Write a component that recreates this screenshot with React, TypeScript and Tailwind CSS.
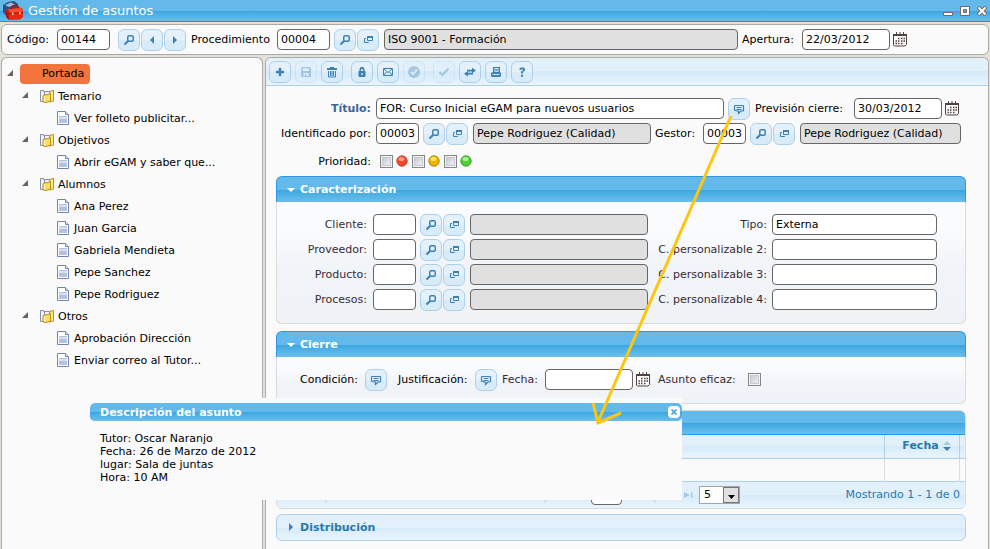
import React from 'react';

type GlyphName =
  | 'search' | 'copy' | 'left' | 'right' | 'plus' | 'disk' | 'trash' | 'lock' | 'mail'
  | 'circleCheck' | 'check' | 'transfer' | 'print' | 'help' | 'comment';

const glyphs: Record<GlyphName, React.ReactNode> = {
  search: (
    <>
      <rect x="5.750" y="2.750" width="5.500" height="5.500" rx="1.500" fill="none" stroke="currentColor" strokeWidth="1.500" />
      <path d="M6 8 L2.500 11.500" stroke="currentColor" strokeWidth="2" fill="none" />
    </>
  ),
  copy: (
    <>
      <path d="M6.500 3.500h5v4h-5z" fill="none" stroke="currentColor" />
      <path d="M6 3h6v2H6z" fill="currentColor" />
      <path d="M5 5.500H3.500v4h4V9" fill="none" stroke="currentColor" />
    </>
  ),
  left: <path d="M9 3v8L5 7z" fill="currentColor" />,
  right: <path d="M5 3v8l4-4z" fill="currentColor" />,
  plus: <path d="M6 3h2v3h3v2H8v3H6V8H3V6h3z" fill="currentColor" stroke="currentColor" strokeWidth=".4" />,
  disk: (
    <path fillRule="evenodd" d="M2 3l1-1h8l1 1v9H2zM4 3.500v2.500h6V3.500zM4.500 8v3h1.500V9h1v2h2.500V8z" fill="currentColor" />
  ),
  trash: (
    <>
      <path d="M5 2h4v1h3v2H2V3h3z" fill="currentColor" />
      <path d="M3.500 6v6h7V6M5.500 6v5M7 6v5M8.500 6v5" fill="none" stroke="currentColor" />
    </>
  ),
  lock: (
    <path fillRule="evenodd" d="M3.500 6h1V4l1.200-2h2.600L9.500 4v2h1v5l-.5 1H4l-.5-1zM6 6h2V4.200H6zM6.300 8v2h1.400V8z" fill="currentColor" />
  ),
  mail: <path d="M2.500 3.500h9v7h-9zM3 4l4 3.500L11 4M3 10l2.500-3M11 10L8.500 7" fill="none" stroke="currentColor" />,
  circleCheck: (
    <>
      <circle cx="7" cy="7" r="6" fill="currentColor" />
      <path d="M4 7l2 2.200L10 4.800" fill="none" stroke="#e3f1fb" strokeWidth="1.800" />
    </>
  ),
  check: <path d="M2.500 7l3 3 6-6.500" fill="none" stroke="currentColor" strokeWidth="2" />,
  transfer: (
    <>
      <path d="M4 4.800h5V2.800l4 2.700L9 8.200V6.500H4z" fill="currentColor" />
      <path d="M10 7.700H5V6L1 8.700l4 2.700V9.500h5z" fill="currentColor" />
    </>
  ),
  print: (
    <path fillRule="evenodd" d="M4 2h7v5l1 1v3l-1 1H3l-1-1V8l2-1zM5.500 3v4h4V3zM6 4h3v.8H6zM6 5.500h3v.8H6zM3.500 9v1h7V9z" fill="currentColor" />
  ),
  help: (
    <path d="M4.500 5V3.500L6 2.500h2.500L10 3.500v2L8 7v1.500H6V6.500l2-1.300V4.300H6.500V5zM6 9.700h2v2H6z" fill="currentColor" />
  ),
  comment: (
    <>
      <path d="M3 3.500h8l.5.5v4.500l-.5.500H9L6.500 11.500V9H5L2.500 8V4z" fill="none" stroke="currentColor" strokeWidth="1.200" />
      <path d="M4.500 5.500h5M4.500 7.500h5" stroke="currentColor" />
    </>
  ),
};

function IconButton({ icon, label, disabled = false, className = '' }: {
  icon: GlyphName; label: string; disabled?: boolean; className?: string;
}) {
  return (
    <button
      type="button"
      aria-label={label}
      disabled={disabled}
      className={`flex h-[22px] w-[22px] shrink-0 items-center justify-center rounded-md border border-[#aed0ea] bg-linear-to-b from-[#e4f1fb] from-50% to-[#d7ebf9] to-50% text-[#3d80b3] disabled:opacity-35 ${className}`}
    >
      <svg width="14" height="14" viewBox="0 0 14 14" aria-hidden="true">{glyphs[icon]}</svg>
    </button>
  );
}

function TextBox({ id, value = '', label, readOnly = false, className = '' }: {
  id?: string; value?: string; label?: string; readOnly?: boolean; className?: string;
}) {
  return (
    <input
      id={id}
      type="text"
      aria-label={label}
      defaultValue={value}
      readOnly={readOnly}
      className={`h-[21px] min-w-0 rounded-[4px] border border-[#666] px-[3px] text-[11px] text-black outline-none ${readOnly ? 'bg-[#e0e0e0]' : 'bg-white'} ${className}`}
    />
  );
}

function CalendarIcon({ label, className = '' }: { label: string; className?: string }) {
  return (
    <button type="button" aria-label={label} className={`shrink-0 ${className}`}>
      <svg width="14" height="15" viewBox="0 0 14 15" aria-hidden="true">
        <path d="M.500 2.500h13v10l-1.500 1.500H1.500l-1-1z" fill="#fafafa" stroke="#50423f" />
        <path d="M0 2h14v2H0z" fill="#50423f" />
        <path d="M3.500 0v3M7 0v3M10.500 0v3" stroke="#50423f" />
        <path d="M5 6.500h1.500M8 6.500h1.500M10.500 6.500h1.500M2.500 9h1.500M5 9h1.500M8 9h1.500M10.500 9h1.500M2.500 11.500h1.500M5 11.500h1.500M8 11.500h1.500" stroke="#50423f" strokeWidth="1.500" />
      </svg>
    </button>
  );
}

function CheckBox({ id, label, className = '' }: { id: string; label?: string; className?: string }) {
  return (
    <input
      id={id}
      type="checkbox"
      aria-label={label}
      className={`h-[13px] w-[13px] shrink-0 appearance-none border border-[#858686] bg-linear-to-br from-[#bcc2cc] to-[#f8f8f8] shadow-[inset_0_0_0_1px_#f4f4f4,inset_0_0_0_2px_#c6cad0] ${className}`}
    />
  );
}

function FolderIcon() {
  return (
    <svg width="15" height="15" viewBox="0 0 15 15" className="shrink-0" aria-hidden="true">
      <path d="M.500 1.500h3v1h2v10h-5z" fill="#f1f3f8" stroke="#8690a8" />
      <path d="M9 2.500l4.500-1v10.500l-4.500 1z" fill="#fbe98a" stroke="#b8901e" />
      <path d="M4.500 2.500h5v9h-5z" fill="#eef1f8" stroke="#8690a8" />
      <path d="M3 6.500l3-1 1 .5 3.500-1.500V12L6 13.500l-3-.5z" fill="#f8e05e" stroke="#b8901e" />
      <path d="M4.500 7.500v5" stroke="#fff6bd" />
    </svg>
  );
}

function DocIcon() {
  return (
    <svg width="12" height="14" viewBox="0 0 12 14" className="shrink-0" aria-hidden="true">
      <path d="M.5.500h8l3 3v10H.500z" fill="#fff" stroke="#7386ad" />
      <path d="M8.500.500v3h3" fill="#dfe5f2" stroke="#7386ad" />
      <path d="M2 5h8v7H2z" fill="#b4c0df" />
      <path d="M2 7h8" stroke="#fff" />
    </svg>
  );
}

function Expander() {
  return (
    <svg width="6" height="6" viewBox="0 0 6 6" className="mb-[3px] shrink-0" aria-hidden="true">
      <path d="M6 0v6H0z" fill="#6b625f" />
    </svg>
  );
}

const tree = [
  { name: 'Temario', items: ['Ver folleto publicitar...'] },
  { name: 'Objetivos', items: ['Abrir eGAM y saber que...'] },
  { name: 'Alumnos', items: ['Ana Perez', 'Juan Garcia', 'Gabriela Mendieta', 'Pepe Sanchez', 'Pepe Rodriguez'] },
  { name: 'Otros', items: ['Aprobación Dirección', 'Enviar correo al Tutor...'] },
];

const toolbar: { icon: GlyphName; label: string; disabled?: boolean }[][] = [
  [{ icon: 'plus', label: 'Nuevo' }, { icon: 'disk', label: 'Guardar', disabled: true }, { icon: 'trash', label: 'Eliminar' }],
  [{ icon: 'lock', label: 'Bloquear' }, { icon: 'mail', label: 'Correo' }, { icon: 'circleCheck', label: 'Aprobar', disabled: true }],
  [{ icon: 'check', label: 'Validar', disabled: true }, { icon: 'transfer', label: 'Transferir' }, { icon: 'print', label: 'Imprimir' }, { icon: 'help', label: 'Ayuda' }],
];

const fields = [
  { left: 'Cliente:', right: 'Tipo:', value: 'Externa' },
  { left: 'Proveedor:', right: 'C. personalizable 2:', value: '' },
  { left: 'Producto:', right: 'C. personalizable 3:', value: '' },
  { left: 'Procesos:', right: 'C. personalizable 4:', value: '' },
];

const priorities = [
  { id: 'alta', light: '#ff9a80', color: '#f0482a', edge: '#c4472f' },
  { id: 'media', light: '#ffe45c', color: '#f0b400', edge: '#a98412' },
  { id: 'baja', light: '#a8f58c', color: '#4fcf38', edge: '#4a9a3c' },
];

const headerBlue = 'bg-[#63b9e9]';

function BlueFill() {
  return (
    <span className="absolute inset-x-0 bottom-0 h-1/2 bg-linear-to-b from-[#38a7e2] to-[#6cbeeb]" aria-hidden="true" />
  );
}

function SectionHeader({ title }: { title: string }) {
  return (
    <h2>
      <button type="button" aria-expanded="true" className={`relative flex h-[26px] w-full items-center overflow-hidden rounded-t-md border border-b-0 border-[#2f96e0] pl-2.5 text-[11px] font-bold text-white ${headerBlue}`}>
        <BlueFill />
        <svg width="8" height="4" viewBox="0 0 8 4" className="relative mr-[5px]" aria-hidden="true"><path d="M0 0h8L4 4z" fill="#fff" /></svg>
        <span className="relative">{title}</span>
      </button>
    </h2>
  );
}

const sectionBody = 'rounded-b-md border border-t-0 border-[#d9dbdd] bg-linear-to-b from-[#fafbfd] from-25% via-[#f1f4f8] via-55% to-[#f0f3f6]';

export default function App() {
  return (
    <div className="relative flex h-screen flex-col overflow-hidden bg-[#e4e2d8] font-['DejaVu_Sans',Verdana,sans-serif] text-[11px] leading-[13px] text-black">
      <header className={`relative flex h-[22px] shrink-0 items-center border-b border-[#777] pl-[3px] pr-[3px] ${headerBlue}`}>
        <BlueFill />
        <svg width="20" height="19" viewBox="0 0 20 19" className="relative" aria-hidden="true">
          <path d="M0 4l5-3 6-1 4 3v9L3 15 0 11z" fill="#2b4f86" />
          <path d="M2 4l6-2.500 4 2L6 6z" fill="#9dbbe0" />
          <path d="M5 8l13-1.500 2 2V16l-3 2.500L6 19l-3-3V9z" fill="#e8270f" />
          <path d="M3 9l3 2v8l-3-3z" fill="#b3170c" />
          <path d="M9 8V6l1.500-1.500H14L15.500 6v1.500" fill="none" stroke="#b3170c" strokeWidth="1.500" />
          <path d="M6 8.500L18 7l1.500 2v2L7 12z" fill="#ff4f30" />
          <path d="M6 12.500l14-1" fill="none" stroke="#a3130a" />
          <path d="M9 11.500h1.500V14H9zM16 11h1.500v2.500H16z" fill="#ffc9a0" />
        </svg>
        <h1 className="relative ml-[5px] text-[13px] leading-4 text-white">Gestión de asuntos</h1>
        <div className="relative ml-auto flex items-center gap-[7px]">
          <button type="button" aria-label="Minimizar">
            <svg width="10" height="10" viewBox="0 0 10 10"><path d="M.5 6.500h9v3h-9z" fill="#fff" stroke="#74695e" /></svg>
          </button>
          <button type="button" aria-label="Maximizar">
            <svg width="10" height="10" viewBox="0 0 10 10"><path fillRule="evenodd" d="M.5.500h9v9h-9zM3.500 3.500h3v3h-3z" fill="#fff" stroke="#74695e" /></svg>
          </button>
          <button type="button" aria-label="Cerrar">
            <svg width="10" height="10" viewBox="0 0 10 10"><path d="M1 1l8 8M9 1L1 9" stroke="#74695e" strokeWidth="4" /><path d="M1.500 1.500l7 7M8.500 1.500l-7 7" stroke="#fff" strokeWidth="2" /></svg>
          </button>
        </div>
      </header>

      <div className="mx-px mt-0.5 flex h-[31px] shrink-0 items-center rounded-md border border-[#aaa] bg-[#fafafa] pl-[5px] pr-[81px]">
        <label htmlFor="codigo" className="w-[50px] whitespace-nowrap">Código:</label>
        <TextBox id="codigo" value="00144" className="w-[53px]" />
        <IconButton icon="search" label="Buscar asunto" className="ml-2" />
        <IconButton icon="left" label="Anterior" className="ml-px" />
        <IconButton icon="right" label="Siguiente" className="ml-px" />
        <label htmlFor="procedimiento" className="ml-[5px] w-[86px] whitespace-nowrap">Procedimiento</label>
        <TextBox id="procedimiento" value="00004" className="w-[53px]" />
        <IconButton icon="search" label="Buscar procedimiento" className="ml-1" />
        <IconButton icon="copy" label="Abrir procedimiento" className="ml-px" />
        <TextBox label="Nombre del procedimiento" value="ISO 9001 - Formación" readOnly className="ml-[5px] flex-1" />
        <label htmlFor="apertura" className="ml-1 w-[60px] whitespace-nowrap">Apertura:</label>
        <TextBox id="apertura" value="22/03/2012" className="w-[88px]" />
        <CalendarIcon label="Elegir fecha de apertura" className="ml-[3px]" />
      </div>

      <div className="mx-px mt-0.5 flex min-h-0 flex-1 gap-0.5">
        <nav aria-label="Contenido" className="w-[262px] shrink-0 overflow-hidden rounded-t-md border border-b-0 border-[#aaa] bg-[#fafafa] pt-[5px]">
          <div className="flex h-[22px] items-center pl-[5px]">
            <Expander />
            <a href="#portada" className="ml-[7px] h-5 w-[70px] rounded-[4px] bg-[#f3743c] pl-[22px] leading-5">Portada</a>
          </div>
          <ul>
            {tree.map((group) => (
              <li key={group.name}>
                <div className="flex h-[22px] items-center pl-5">
                  <Expander />
                  <span className="ml-3"><FolderIcon /></span>
                  <span className="ml-[3px]">{group.name}</span>
                </div>
                <ul>
                  {group.items.map((item) => (
                    <li key={item} className="flex h-[22px] items-center gap-[5px] pl-[55px]">
                      <DocIcon />
                      <a href="#documento">{item}</a>
                    </li>
                  ))}
                </ul>
              </li>
            ))}
          </ul>
        </nav>

        <main className="min-w-0 flex-1 overflow-hidden rounded-t-md border border-b-0 border-[#aaa] bg-[#fafafa]">
          <div role="toolbar" className="flex h-7 items-center gap-2 rounded-t-md border-b border-[#aed0ea] bg-linear-to-b from-[#e2f0fa] from-50% via-[#d5eaf9] via-50% to-[#e9f4fc] pl-[3px]">
            {toolbar.map((group, i) => (
              <div key={i} className="flex gap-1">
                {group.map((b) => <IconButton key={b.label} icon={b.icon} label={b.label} disabled={b.disabled} />)}
              </div>
            ))}
          </div>

          <div className="pl-2.5 pr-[22px] pt-2.5">
            <div className="flex h-[25px] items-center pr-[7px]">
              <label htmlFor="titulo" className="mr-[5px] w-[95px] text-right font-bold text-[#3c64a0]">Título:</label>
              <TextBox id="titulo" value="FOR: Curso Inicial eGAM para nuevos usuarios" className="flex-1" />
              <IconButton icon="comment" label="Descripción del asunto" className="ml-1" />
              <label htmlFor="prevision" className="ml-[5px] w-[99px] whitespace-nowrap">Previsión cierre:</label>
              <TextBox id="prevision" value="30/03/2012" className="w-[88px]" />
              <CalendarIcon label="Elegir fecha prevista" className="ml-[3px]" />
            </div>
            <div className="flex h-[25px] items-center pr-[5px]">
              <label htmlFor="identificado" className="mr-[5px] w-[95px] whitespace-nowrap text-right">Identificado por:</label>
              <TextBox id="identificado" value="00003" className="w-[43px]" />
              <IconButton icon="search" label="Buscar persona" className="ml-1" />
              <IconButton icon="copy" label="Abrir persona" className="ml-px" />
              <TextBox label="Nombre de quien identifica" value="Pepe Rodriguez (Calidad)" readOnly className="ml-[5px] flex-1" />
              <label htmlFor="gestor" className="ml-1 w-12 whitespace-nowrap">Gestor:</label>
              <TextBox id="gestor" value="00003" className="w-[43px]" />
              <IconButton icon="search" label="Buscar gestor" className="ml-1" />
              <IconButton icon="copy" label="Abrir gestor" className="ml-px" />
              <TextBox label="Nombre del gestor" value="Pepe Rodriguez (Calidad)" readOnly className="ml-[5px] w-[161px]" />
            </div>
            <fieldset className="flex h-[30px] items-center">
              <span className="mr-[9px] w-[95px] text-right">Prioridad:</span>
              {priorities.map((p) => (
                <label key={p.id} htmlFor={`prioridad-${p.id}`} className="flex w-8 items-center gap-[3px]">
                  <CheckBox id={`prioridad-${p.id}`} label={`Prioridad ${p.id}`} />
                  <svg width="12" height="12" viewBox="0 0 12 12" aria-hidden="true">
                    <circle cx="6" cy="6" r="5.200" fill={p.color} stroke={p.edge} />
                    <ellipse cx="5.500" cy="4" rx="3" ry="2" fill={p.light} />
                  </svg>
                </label>
              ))}
            </fieldset>

            <section className="mb-[7px]">
              <SectionHeader title="Caracterización" />
              <div className={`pb-[11px] pt-2.5 ${sectionBody}`}>
                {fields.map((f, i) => (
                  <div key={f.left} className="flex h-[25px] items-center pr-7 text-[#362b36]">
                    <label htmlFor={`izq-${i}`} className="mr-1.5 w-[90px] text-right">{f.left}</label>
                    <TextBox id={`izq-${i}`} className="w-[43px]" />
                    <IconButton icon="search" label={`Buscar ${f.left}`} className="ml-1" />
                    <IconButton icon="copy" label={`Abrir ${f.left}`} className="ml-px" />
                    <TextBox label={`Nombre ${f.left}`} readOnly className="ml-[5px] flex-1" />
                    <label htmlFor={`der-${i}`} className="mr-[5px] w-[119px] whitespace-nowrap text-right">{f.right}</label>
                    <TextBox id={`der-${i}`} value={f.value} className="w-[165px]" />
                  </div>
                ))}
              </div>
            </section>

            <section className="mb-1.5">
              <SectionHeader title="Cierre" />
              <div className={`pb-[11px] pt-2.5 ${sectionBody}`}>
                <div className="flex h-[25px] items-center whitespace-nowrap pl-[23px]">
                  <span className="w-[65px]">Condición:</span>
                  <IconButton icon="comment" label="Condición" />
                  <span className="ml-[11px] w-[77px]">Justificación:</span>
                  <IconButton icon="comment" label="Justificación" />
                  <label htmlFor="fecha-cierre" className="ml-[5px] w-[43px] text-[#362b36]">Fecha:</label>
                  <TextBox id="fecha-cierre" className="w-[88px]" />
                  <CalendarIcon label="Elegir fecha de cierre" className="ml-[3px]" />
                  <label htmlFor="eficaz" className="ml-2 w-[90px] text-[#362b36]">Asunto eficaz:</label>
                  <CheckBox id="eficaz" />
                </div>
              </div>
            </section>

            <section className="mb-[5px] overflow-hidden rounded-md border border-[#d9dbdd]">
              <div className={`relative h-6 border-b border-[#2f96e0] ${headerBlue}`}><BlueFill /></div>
              <table className="w-full table-fixed border-collapse bg-[#fafafa]">
                <thead>
                  <tr className="h-[23px] border-b border-[#aed0ea] bg-linear-to-b from-[#e2f0fa] from-50% via-[#d5eaf9] via-50% to-[#e9f4fc] text-[#2779aa]">
                    <td />
                    <th scope="col" className="w-[75px] border-x border-[#aed0ea] p-0 pb-0.5 pl-2.5">
                      <span className="flex items-center justify-center gap-1">
                        Fecha
                        <svg width="8" height="10" viewBox="0 0 8 10" className="mt-0.5" aria-hidden="true">
                          <path d="M0 4h8L4 0z" fill="#a6cbe4" />
                          <path d="M0 6h8l-4 4z" fill="#3d80b3" />
                        </svg>
                      </span>
                    </th>
                    <td className="w-1.5 p-0" />
                  </tr>
                </thead>
                <tbody>
                  <tr className="h-[23px] border-b border-[#aed0ea]">
                    <td />
                    <td className="border-x border-[#d9dbdd]" />
                    <td className="p-0" />
                  </tr>
                </tbody>
              </table>
              <div className="flex h-[26px] items-center bg-linear-to-b from-[#e2f0fa] from-50% via-[#d5eaf9] via-50% to-[#e9f4fc] pr-[5px] text-[#2779aa]">
                <span className="w-12 pl-5">Log</span>
                <span className="h-4 w-0.5 bg-[#d2e0e8]" aria-hidden="true" />
                <span className="ml-[18px] flex-1">Copiar</span>
                <span className="h-4 w-0.5 bg-[#d2e0e8]" aria-hidden="true" />
                <label htmlFor="pagina" className="ml-[3px] w-[42px]">Página</label>
                <TextBox id="pagina" className="w-[31px]" />
                <span className="ml-8 h-4 w-0.5 bg-[#d2e0e8]" aria-hidden="true" />
                <button type="button" aria-label="Última página" disabled className="ml-7">
                  <svg width="9" height="6" viewBox="0 0 9 6"><path d="M0 0v6l6-3zM7 0h1.500v6H7z" fill="#a6cbe4" /></svg>
                </button>
                <div className="relative ml-1.5 h-[18px] w-[41px]">
                  <select aria-label="Filas por página" defaultValue="5" className="h-full w-full appearance-none border border-[#a5a5a5] bg-white pl-1 text-[11px] leading-4 text-black">
                    <option>5</option>
                    <option>10</option>
                  </select>
                  <span className="pointer-events-none absolute inset-y-px right-px flex w-4 items-center justify-center border border-[#777] bg-[#e0e0e0]" aria-hidden="true">
                    <svg width="7" height="4" viewBox="0 0 7 4" className="mt-1"><path d="M0 0h7L3.500 4z" fill="#000" /></svg>
                  </span>
                </div>
                <span className="ml-[101px] w-[119px] whitespace-nowrap text-right">Mostrando 1 - 1 de 0</span>
              </div>
            </section>

            <h2>
              <button type="button" aria-expanded="false" className="flex h-[27px] w-full items-center rounded-md border border-[#aed0ea] bg-linear-to-b from-[#e2f0fa] from-50% via-[#d5eaf9] via-50% to-[#e9f4fc] pl-3 font-bold text-[#2779aa]">
                <svg width="4" height="8" viewBox="0 0 4 8" className="mr-[7px]" aria-hidden="true"><path d="M0 0v8l4-4z" fill="#3d80b3" /></svg>
                Distribución
              </button>
            </h2>
          </div>
        </main>
      </div>

      <div role="dialog" aria-labelledby="dialogo-titulo" className="absolute left-[90px] top-[398px] h-[102px] w-[592px] bg-[#fafafa] pt-[5px]">
        <div className={`relative flex h-[18px] items-center overflow-hidden rounded-[5px] pl-2.5 pr-0.5 ${headerBlue}`}>
          <BlueFill />
          <h2 id="dialogo-titulo" className="relative font-bold text-white">Descripción del asunto</h2>
          <button type="button" aria-label="Cerrar descripción" className="relative ml-auto flex h-3 w-3 items-center justify-center rounded-[4px] bg-white">
            <svg width="6" height="6" viewBox="0 0 6 6"><path d="M.5.500l5 5M5.500.500l-5 5" stroke="#4fa9dc" strokeWidth="1.800" /></svg>
          </button>
        </div>
        <p className="whitespace-pre-line pl-2.5 pt-[11px]">{'Tutor: Oscar Naranjo\nFecha: 26 de Marzo de 2012\nlugar: Sala de juntas\nHora: 10 AM'}</p>
      </div>

      <svg width="150" height="320" viewBox="590 110 150 320" className="pointer-events-none absolute left-[590px] top-[110px]" aria-hidden="true">
        <path d="M731 116L598 422M593 403l5 20 23-10" fill="none" stroke="#ffc60f" strokeWidth="3" />
      </svg>
    </div>
  );
}
